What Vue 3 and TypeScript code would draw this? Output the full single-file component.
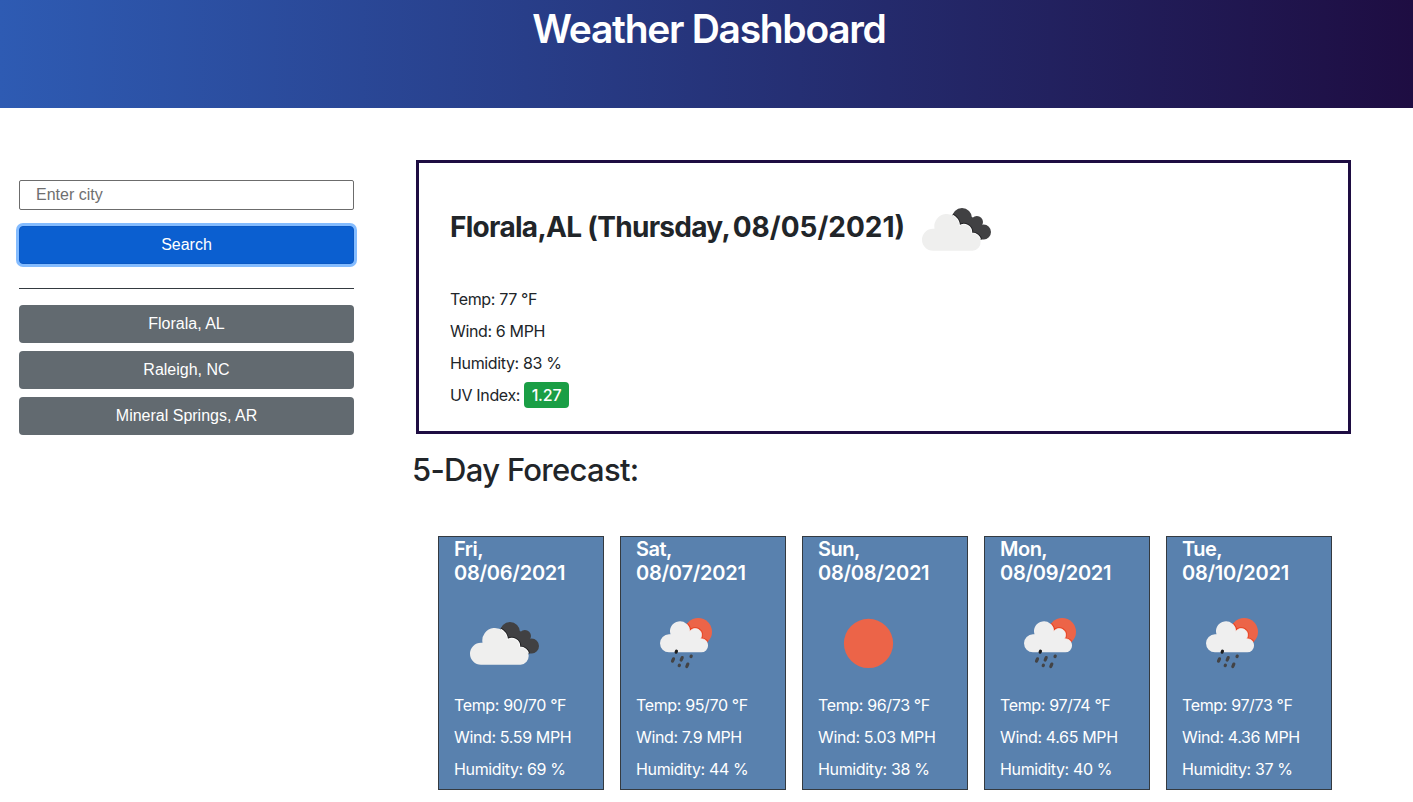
<script setup lang="ts">
import { ref } from 'vue'

type Icon = 'clouds' | 'rain' | 'sun'

interface Day {
  name: string
  date: string
  icon: Icon
  temp: string
  wind: string
  humidity: string
}

const city = ref('')
const history: string[] = ['Florala, AL', 'Raleigh, NC', 'Mineral Springs, AR']

const forecast: Day[] = [
  { name: 'Fri,', date: '08/06/2021', icon: 'clouds', temp: '90/70', wind: '5.59', humidity: '69' },
  { name: 'Sat,', date: '08/07/2021', icon: 'rain', temp: '95/70', wind: '7.9', humidity: '44' },
  { name: 'Sun,', date: '08/08/2021', icon: 'sun', temp: '96/73', wind: '5.03', humidity: '38' },
  { name: 'Mon,', date: '08/09/2021', icon: 'rain', temp: '97/74', wind: '4.65', humidity: '40' },
  { name: 'Tue,', date: '08/10/2021', icon: 'rain', temp: '97/73', wind: '4.36', humidity: '37' },
]
</script>

<template>
  <svg class="defs" width="0" height="0" aria-hidden="true">
    <defs>
      <path
        id="dark-cloud"
        d="M46 38a10 10 0 0 1 20 0a10 10 0 0 1-20 0zM64.8 42a6.1 6.1 0 0 1 12.2 0a6.1 6.1 0 0 1-12.2 0zM70.2 52a7.4 7.4 0 0 1 14.8 0a7.4 7.4 0 0 1-14.8 0zM56 34L66 37L78 46L78 59.4L66 59L50 46z"
      />
      <path
        id="light-cloud"
        d="M27 70.7a11 11 0 0 1 0-22h1.5a12.5 12.5 0 1 1 24.8-2.6 7.6 7.6 0 0 1 12 7.2 8.7 8.7 0 0 1 1.3 17.4z"
      />
      <path
        id="rain-cloud"
        d="M33 58.3a9 9 0 0 1 0-18h1.5a9.9 9.9 0 1 1 19.3-3 6.3 6.3 0 0 1 10.8 7.4h.8a6.8 6.8 0 0 1-.2 13.6z"
      />
      <clipPath id="dark-clip"><use href="#dark-cloud" /></clipPath>
      <clipPath id="sun-clip"><circle cx="62.2" cy="37.7" r="13.8" /></clipPath>
      <symbol id="clouds" viewBox="0 0 100 100">
        <use href="#dark-cloud" fill="#414143" />
        <g clip-path="url(#dark-clip)" fill="none">
          <use href="#light-cloud" stroke="#242426" stroke-width="3.6" />
          <use href="#light-cloud" stroke="#fff" stroke-width="1.6" />
        </g>
        <use href="#light-cloud" fill="#efefee" />
      </symbol>
      <symbol id="rain" viewBox="0 0 100 100">
        <circle cx="62.2" cy="37.7" r="13.8" fill="#ec6448" />
        <g clip-path="url(#sun-clip)" fill="none">
          <use href="#rain-cloud" stroke="#e8401f" stroke-width="2.6" />
          <use href="#rain-cloud" stroke="#fbe4df" stroke-width="0.7" />
        </g>
        <use href="#rain-cloud" fill="#efefef" />
        <path d="M40.1 58.2l.4-1" stroke="#1c1c1d" stroke-width="3.1" stroke-linecap="round" />
        <path
          d="M36.5 67.2l1-2.4M45.2 66l1-2.4M50.8 72.5l1-2.4M55 62.6l.2-.5M43.2 71.6l.2-.4"
          stroke="#434345"
          stroke-width="3.2"
          stroke-linecap="round"
        />
      </symbol>
      <symbol id="sun" viewBox="0 0 100 100">
        <circle cx="50.5" cy="49.4" r="24.6" fill="#ec6448" />
      </symbol>
    </defs>
  </svg>

  <header class="banner">
    <h1>Weather Dashboard</h1>
  </header>

  <div class="layout">
    <aside class="sidebar">
      <input v-model="city" class="city" type="text" placeholder="Enter city" />
      <button class="btn search" type="button">Search</button>
      <div class="rule"></div>
      <button v-for="item in history" :key="item" class="btn past" type="button">{{ item }}</button>
    </aside>

    <main class="content">
      <section class="today">
        <div class="today-head">
          <h2>Florala,AL (Thursday, <span class="date">08/05/2021)</span></h2>
          <svg class="icon"><use href="#clouds" /></svg>
        </div>
        <p>Temp: 77 °F</p>
        <p>Wind: 6 MPH</p>
        <p>Humidity: 83 %</p>
        <p class="uv"><span class="uv-label">UV Index:</span><span class="badge">1.27</span></p>
      </section>

      <h3 class="forecast-title">5-Day Forecast:</h3>

      <section class="cards">
        <article v-for="day in forecast" :key="day.date" class="card">
          <h4><span class="day-name">{{ day.name }}</span><br /><span>{{ day.date }}</span></h4>
          <svg class="icon"><use :href="'#' + day.icon" /></svg>
          <p>Temp: {{ day.temp }} °F</p>
          <p>Wind: {{ day.wind }} MPH</p>
          <p>Humidity: {{ day.humidity }} %</p>
        </article>
      </section>
    </main>
  </div>
</template>

<style>
body {
  margin: 0;
  background: #fff;
  overflow: hidden;
}
</style>

<style scoped>
* {
  box-sizing: border-box;
}
h1,
h2,
h3,
h4,
p {
  margin: 0;
}
.defs {
  display: block;
  height: 0;
}
.banner,
.layout {
  font-family: Inter, sans-serif;
  color: #212529;
}
.banner {
  height: 108px;
  padding: 5px 0 0 5px;
  background: linear-gradient(to right, #2e5bb3, #1e0d42);
  text-align: center;
}
h1 {
  color: #fff;
  font-size: 39px;
  line-height: 48px;
  font-weight: 560;
  letter-spacing: -1.3px;
}
.layout {
  display: flex;
}
.sidebar {
  width: 335px;
  margin: 72px 62px 0 19px;
  display: flex;
  flex-direction: column;
}
.city {
  height: 30px;
  padding: 1px 16px 2px;
  border: 1px solid #6c6c6c;
  border-radius: 2px;
  background: #fff;
  font: 16px/24px 'Liberation Sans', Arial, sans-serif;
  outline: none;
}
.city::placeholder {
  color: #6f6f6f;
  opacity: 1;
}
.btn {
  height: 38px;
  padding: 0;
  border: 0;
  border-radius: 4px;
  color: #fff;
  font: 16px/24px 'Liberation Sans', Arial, sans-serif;
}
.search {
  margin-top: 16px;
  background: #0b5fd0;
  border: 1px solid #0a58c4;
  box-shadow: 0 0 0 3px #84bcff;
}
.rule {
  height: 1px;
  margin: 24px 0 16px;
  background: #343a40;
}
.past {
  margin-bottom: 8px;
  background: #626a70;
}
.content {
  width: 935px;
  padding-top: 52px;
  font-size: 16px;
  line-height: 24px;
}
.today {
  height: 274px;
  padding: 17px 31px 0;
  border: 3px solid #1e0d42;
}
.today-head {
  display: flex;
  height: 107px;
}
h2 {
  width: 456px;
  padding-top: 30px;
  font-size: 28px;
  line-height: 34px;
  font-weight: 700;
  letter-spacing: -0.7px;
  white-space: nowrap;
}
.date {
  margin-left: -2.5px;
  letter-spacing: 0;
}
.icon {
  display: block;
  flex: none;
  width: 100px;
  height: 100px;
}
p {
  margin-bottom: 8px;
  letter-spacing: -0.36px;
  white-space: nowrap;
}
.uv {
  display: flex;
}
.uv-label {
  width: 74px;
}
.badge {
  width: 45px;
  height: 26px;
  margin-top: -1px;
  border-radius: 4px;
  background: #1a9e45;
  color: #fff;
  line-height: 26px;
  font-weight: 500;
  letter-spacing: -0.2px;
  text-align: center;
}
.forecast-title {
  margin: 17px 0 0 -4px;
  font-size: 31px;
  line-height: 37px;
  font-weight: 550;
  letter-spacing: -0.7px;
}
.cards {
  display: flex;
  gap: 16px;
  margin: 48px 0 0 22px;
}
.card {
  flex: none;
  width: 166px;
  height: 254px;
  padding: 0 15px;
  border: 1px solid #343a40;
  background: #5981ae;
  color: #fff;
}
h4 {
  margin-bottom: 9px;
  font-size: 20px;
  line-height: 24px;
  font-weight: 570;
  letter-spacing: -0.24px;
}
.day-name {
  letter-spacing: -0.5px;
}
.card .icon {
  margin-bottom: -1px;
}
.card p {
  font-weight: 430;
}
</style>
